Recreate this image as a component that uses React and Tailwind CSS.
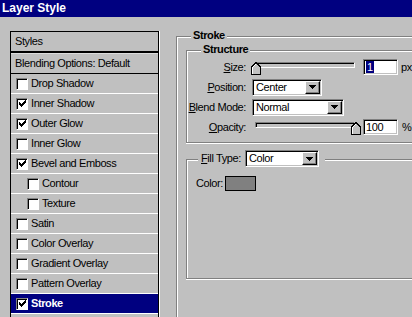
import React from 'react';

const font = "font-['Liberation_Sans',Arial,sans-serif]";

const Check = () => (
  <svg width="7" height="7" viewBox="0 0 7 7" shapeRendering="crispEdges">
    <polygon points="0,2 2,4 7,-1 7,2 2,7 0,5" fill="#000" />
  </svg>
);

const CheckBox = ({ checked }) => (
  <div className="w-[12px] h-[12px] shrink-0 bg-white border border-t-[#808080] border-l-[#808080] border-b-white border-r-white shadow-[inset_1px_1px_0_#000] flex items-center justify-center">
    {checked && <Check />}
  </div>
);

const items = [
  { label: 'Drop Shadow', checked: false },
  { label: 'Inner Shadow', checked: true },
  { label: 'Outer Glow', checked: true },
  { label: 'Inner Glow', checked: false },
  { label: 'Bevel and Emboss', checked: true },
  { label: 'Contour', checked: false, indent: true },
  { label: 'Texture', checked: false, indent: true },
  { label: 'Satin', checked: false },
  { label: 'Color Overlay', checked: false },
  { label: 'Gradient Overlay', checked: false },
  { label: 'Pattern Overlay', checked: false },
  { label: 'Stroke', checked: true, active: true },
];

const Arrow = () => (
  <div className="w-[15px] h-full shrink-0 bg-[#c0c0c0] border border-t-white border-l-white border-b-black border-r-black shadow-[inset_-1px_-1px_0_#808080] flex items-center justify-center">
    <svg width="7" height="4" viewBox="0 0 7 4" shapeRendering="crispEdges">
      <polygon points="0,0 7,0 3.5,4" fill="#000" />
    </svg>
  </div>
);

const Select = ({ value, width }) => (
  <div
    className={`${width} h-[17px] flex bg-white border border-t-[#808080] border-l-[#808080] border-b-white border-r-white shadow-[inset_1px_1px_0_#000,inset_-1px_-1px_0_#c0c0c0] p-[1px]`}
  >
    <div className="flex-1 pl-[2px] leading-[13px] text-[11px] text-black">{value}</div>
    <Arrow />
  </div>
);

const Field = ({ children }) => (
  <div className="w-[35px] h-[16px] bg-white border border-t-[#808080] border-l-[#808080] border-b-white border-r-white shadow-[inset_1px_1px_0_#000,inset_-1px_-1px_0_#c0c0c0] pl-[2px] pt-[1px] flex items-start">
    {children}
  </div>
);

const Thumb = () => (
  <svg width="10" height="13" viewBox="0 0 10 13" shapeRendering="crispEdges">
    <polygon points="0.5,12.5 0.5,5 5,0.5 9.5,5 9.5,12.5" fill="#c0c0c0" stroke="#000" />
    <polyline points="1.5,11.5 1.5,5.5 5,2" fill="none" stroke="#fff" />
  </svg>
);

const Slider = ({ pos }) => (
  <div className="relative w-[103px] h-full flex items-center">
    <div className="ml-[3px] w-[100px] h-[6px] -mt-[4px] bg-[#c0c0c0] border border-t-[#808080] border-l-[#808080] border-b-white border-r-white shadow-[inset_1px_1px_0_#000]" />
    <div className="absolute top-[5px]" style={{ left: pos }}>
      <Thumb />
    </div>
  </div>
);

const Label = ({ u, rest }) => (
  <div className="w-[59px] shrink-0 whitespace-nowrap text-right text-[11px] text-black mr-[6px]">
    <span className="underline underline-offset-1">{u}</span>
    {rest}
  </div>
);

export default function App() {
  return (
    <div className={`w-[412px] h-[317px] overflow-hidden bg-[#c0c0c0] tracking-[-0.4px] ${font}`}>
      <div className="h-[17px] bg-[#000080] text-white font-bold text-[12px] leading-[17px] pl-[2px] tracking-normal">
        Layer Style
      </div>
      <div className="flex pt-[14px] pl-[10px]">
        <div className="w-[149px] h-[300px] shrink-0 border-l border-t border-r border-black shadow-[1px_0_0_#fff] text-[11px] text-black">
          <div className="h-[20px] border-b border-black pl-[4px] leading-[19px]">Styles</div>
          <div className="h-[22px] border-t border-b border-black bg-[#c0c0c0] shadow-[inset_0_1px_0_#dcdcdc] pl-[4px] pt-[1px] leading-[19px]">
            Blending Options: Default
          </div>
          {items.map((it) => (
            <div
              key={it.label}
              className={`h-[20px] border-b border-white flex items-center gap-[3px] whitespace-nowrap ${
                it.indent ? 'pl-[16px]' : 'pl-[5px]'
              } ${it.active ? 'bg-[#000080] text-white font-bold' : ''}`}
            >
              <CheckBox checked={it.checked} />
              <span>{it.label}</span>
            </div>
          ))}
        </div>

        <div className="relative ml-[17px] mt-[5px] w-[260px] h-[300px] shrink-0 border-l border-t border-[#808080] shadow-[inset_1px_1px_0_#fff] pl-[9px] pt-[13px]">
          <div className="absolute left-[14px] -top-[8px] px-[2px] bg-[#c0c0c0] text-[11px] font-bold leading-[13px] text-black">
            Stroke
          </div>

          <div className="relative h-[93px] border border-[#808080] shadow-[inset_1px_1px_0_#fff,0_1px_0_#fff] pt-[6px]">
            <div className="absolute left-[14px] -top-[8px] px-[2px] bg-[#c0c0c0] text-[11px] font-bold leading-[13px] text-black">
              Structure
            </div>
            <div className="h-[20px] flex items-center">
              <Label u="S" rest="ize:" />
              <Slider pos={-1} />
              <div className="ml-[8px]">
                <Field>
                  <span className="bg-[#000080] text-white text-[11px] leading-[12px] px-[1px]">1</span>
                </Field>
              </div>
              <span className="ml-[3px] text-[11px] text-black">px</span>
            </div>
            <div className="h-[20px] flex items-center">
              <Label u="P" rest="osition:" />
              <Select value="Center" width="w-[70px]" />
            </div>
            <div className="h-[20px] flex items-center">
              <Label u="B" rest="lend Mode:" />
              <Select value="Normal" width="w-[92px]" />
            </div>
            <div className="h-[20px] flex items-center">
              <Label u="O" rest="pacity:" />
              <Slider pos={99} />
              <div className="ml-[8px]">
                <Field>
                  <span className="text-[11px] leading-[12px] text-black">100</span>
                </Field>
              </div>
              <span className="ml-[4px] text-[11px] text-black">%</span>
            </div>
          </div>

          <div className="relative mt-[16px] h-[120px] border border-[#808080] shadow-[inset_1px_1px_0_#fff,0_1px_0_#fff] pt-[15px] pl-[9px]">
            <div className="absolute left-[11px] -top-[10px] h-[17px] pl-[3px] pr-[6px] bg-[#c0c0c0] flex items-center text-[11px] text-black">
              <span className="w-[44px] whitespace-nowrap">
                <span className="underline underline-offset-1">F</span>ill Type:
              </span>
              <Select value="Color" width="w-[74px]" />
            </div>
            <div className="flex items-center h-[16px]">
              <span className="w-[29px] text-[11px] text-black">Color:</span>
              <div className="w-[31px] h-[15px] bg-[#808080] border border-black" />
            </div>
          </div>
        </div>
      </div>
    </div>
  );
}
